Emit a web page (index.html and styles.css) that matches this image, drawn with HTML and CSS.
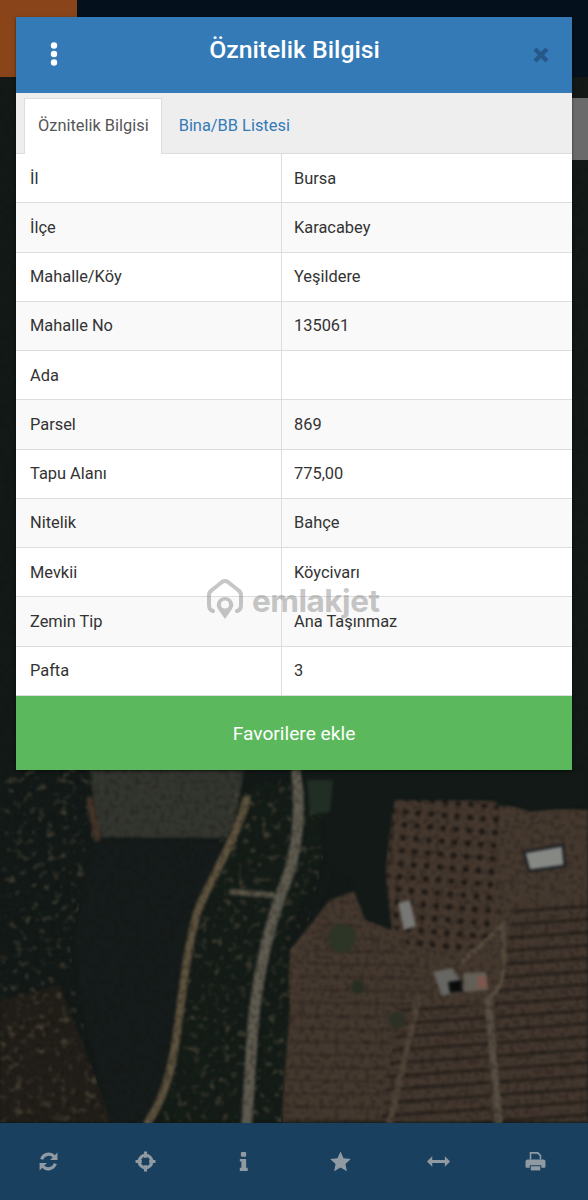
FILE: index.html
```html
<!DOCTYPE html>
<html lang="tr">
<head>
  <meta charset="UTF-8" />
  <meta name="viewport" content="width=device-width, initial-scale=1" />
  <title>Öznitelik Bilgisi</title>
  <link rel="stylesheet" href="styles.css">
</head>
<body>

  <!-- Satellite map behind the dialog -->
  <svg class="map" viewBox="0 0 588 1200" aria-hidden="true">
    <defs>
      <filter id="trees" x="0" y="0" width="100%" height="100%" color-interpolation-filters="sRGB">
        <feTurbulence type="fractalNoise" baseFrequency="0.13" numOctaves="2" seed="11" />
        <feColorMatrix type="matrix" values="0 0 0 0 0.36  0 0 0 0 0.33  0 0 0 0 0.26  4 0 0 0 -2.200" />
        <feGaussianBlur stdDeviation="1" />
      </filter>
      <filter id="grain" x="0" y="0" width="100%" height="100%" color-interpolation-filters="sRGB">
        <feTurbulence type="fractalNoise" baseFrequency="0.2" numOctaves="2" seed="3" />
        <feColorMatrix type="matrix" values="0 0 0 0 0.08  0 0 0 0 0.06  0 0 0 0 0.05  3.500 0 0 0 -1.500" />
        <feGaussianBlur stdDeviation="1" />
      </filter>
      <filter id="soft" color-interpolation-filters="sRGB"><feGaussianBlur stdDeviation="1.500" /></filter>
      <clipPath id="wooded">
        <polygon points="0,770 92,770 94,838 70,950 90,1060 110,1122 0,1122" />
        <polygon points="236,790 320,770 323,860 300,960 287,1030 281,1122 160,1122 185,1000 200,900" />
      </clipPath>
      <pattern id="orchard" width="13" height="13" patternUnits="userSpaceOnUse" patternTransform="rotate(5)">
        <rect width="13" height="13" fill="#46392f" />
        <circle cx="6.500" cy="6.500" r="2.800" fill="#1b1713" />
      </pattern>
      <pattern id="terrace" width="40" height="13" patternUnits="userSpaceOnUse" patternTransform="rotate(-4)">
        <rect width="40" height="13" fill="#44382f" />
        <rect y="8" width="40" height="2" fill="#1c1814" />
      </pattern>
      <pattern id="furrow" width="40" height="13" patternUnits="userSpaceOnUse" patternTransform="rotate(1)">
        <rect width="40" height="13" fill="#463a30" />
        <rect y="8" width="40" height="2" fill="#352c25" />
      </pattern>
    </defs>

    <rect width="588" height="1200" fill="#121a18" />

    <g filter="url(#soft)">
      <polygon points="0,1000 60,985 112,1122 0,1122" fill="#221f1a" />
      <polygon points="90,770 244,770 232,838 97,838" fill="#343730" />
      <polygon points="290,950 330,900 385,880 385,800 588,810 588,1122 282,1122" fill="#463a30" />
      <polygon points="295,1010 320,920 360,925 415,960 440,1000 400,1010 385,1122 282,1122" fill="url(#furrow)" />
      <path d="M392 800 H490 Q500 800 500 815 V910 Q498 945 460 950 H415 Q395 940 385 900 Z" fill="url(#orchard)" />
      <polygon points="400,1007 487,1005 492,1122 380,1122" fill="url(#terrace)" />
      <polygon points="513,908 588,905 588,1122 498,1122 495,1005" fill="url(#terrace)" />
      <polygon points="210,880 250,785 300,780 285,900 255,1010 247,1122 160,1122 180,1040 190,960" fill="#141d18" />
      <polygon points="287,930 300,905 323,860 318,780 305,780 304,850 285,905 270,950 262,1030 255,1122 281,1122 290,1010" fill="#141d18" />
    </g>

    <!-- tree cover -->
    <rect width="588" height="1200" filter="url(#trees)" clip-path="url(#wooded)" opacity="0.6" />
    <polygon points="97,838 232,842 208,890 191,960 180,1000 176,1040 161,1100 144,1122 112,1122 94,1060 79,990 75,940 86,880" fill="#151c1b" filter="url(#soft)" />

    <g fill="none" stroke-linecap="round" filter="url(#soft)">
      <path d="M246 800 C236 840 215 870 198 910 C186 950 182 1000 176 1040 C170 1080 160 1105 148 1122" stroke="#5f543f" stroke-width="8" />
      <path d="M90 800 L97 838" stroke="#46352a" stroke-width="7" />
      <path d="M232 892 L272 895" stroke="#5a5649" stroke-width="6" />
      <path d="M297 772 C300 810 300 850 281 895 C268 930 258 975 253 1025 L247 1122" stroke="#5f5c51" stroke-width="11" />
      <path d="M418 1000 L390 1122" stroke="#52463a" stroke-width="6" />
      <path d="M488 998 L499 1122" stroke="#585044" stroke-width="7" />
      <path d="M488 998 C506 990 505 960 503 925 L462 962" stroke="#5a4f40" stroke-width="4" />
    </g>

    <rect width="588" height="1200" filter="url(#grain)" opacity="0.3" />

    <g filter="url(#soft)">
      <polygon points="300,770 588,770 588,805 530,812 500,800 395,797 385,870 392,930 365,920 350,880 325,860 322,810 308,800" fill="#121916" />
      <polygon points="307,780 333,780 330,812 310,815" fill="#212e24" />
      <circle cx="342" cy="938" r="14" fill="#2c3526" />
      <circle cx="358" cy="987" r="7" fill="#282d21" />
      <circle cx="397" cy="1020" r="9" fill="#2d3125" />
      <polygon points="463,973 486,972 488,990 465,992" fill="#635f56" />
      <polygon points="477,977 487,976 487,988 478,989" fill="#7d574e" />
      <polygon points="398,903 410,900 416,926 404,930" fill="#777775" />
      <polygon points="433,972 452,968 466,990 442,996" fill="#656561" />
      <polygon points="448,982 461,980 463,991 450,993" fill="#0a0c0c" />
    </g>
    <polygon points="524,852 563,845 565,866 529,871" fill="#868884" stroke="#15191c" stroke-width="2.500" filter="url(#soft)" />

    <!-- other map tiles still loading at the top -->
    <rect width="588" height="77" fill="#04101c" />
    <rect width="77" height="77" fill="#8a4419" />
    <rect x="572" y="98" width="16" height="62" fill="#6a6a6a" />
  </svg>

  <!-- Attribute dialog -->
  <section class="modal">
    <header class="modal-head">
      <svg class="menu-dots" viewBox="0 0 10 24" aria-hidden="true">
        <circle cx="5" cy="3.500" r="3.200" />
        <circle cx="5" cy="12" r="3.200" />
        <circle cx="5" cy="20.500" r="3.200" />
      </svg>
      <h1>Öznitelik Bilgisi</h1>
      <svg class="close" viewBox="0 0 18 18" aria-hidden="true">
        <path d="M3 3 L15 15 M15 3 L3 15" />
      </svg>
    </header>

    <nav class="tabs">
      <a class="tab active" href="#">Öznitelik Bilgisi</a>
      <a class="tab" href="#">Bina/BB Listesi</a>
    </nav>

    <table class="attrs">
      <tr><td>İl</td><td>Bursa</td></tr>
      <tr><td>İlçe</td><td>Karacabey</td></tr>
      <tr><td>Mahalle/Köy</td><td>Yeşildere</td></tr>
      <tr><td>Mahalle No</td><td>135061</td></tr>
      <tr><td>Ada</td><td></td></tr>
      <tr><td>Parsel</td><td>869</td></tr>
      <tr><td>Tapu Alanı</td><td>775,00</td></tr>
      <tr><td>Nitelik</td><td>Bahçe</td></tr>
      <tr><td>Mevkii</td><td>Köycivarı</td></tr>
      <tr><td>Zemin Tip</td><td>Ana Taşınmaz</td></tr>
      <tr><td>Pafta</td><td>3</td></tr>
    </table>

    <button class="fav">Favorilere ekle</button>

    <!-- Watermark -->
    <div class="watermark">
      <svg viewBox="0 0 38 48" aria-hidden="true">
        <path class="wm-house" d="M7 35 Q3 34 3 29 V19 Q3 16 6 14 L16 6 Q19 4 22 6 L32 14 Q35 16 35 19 V29 Q35 34 31 35" />
        <path class="wm-pin" d="M19 43 L12 33 Q10 30 11 27 Q13 21 19 21 Q25 21 27 27 Q28 30 26 33 Z M19 24.500 A4 4 0 1 0 19 32.500 A4 4 0 1 0 19 24.500 Z" />
      </svg>
      <span>emlakjet</span>
    </div>
  </section>

  <!-- Bottom toolbar -->
  <footer class="toolbar">
    <svg viewBox="0 0 20 20" aria-hidden="true">
      <path class="line" d="M3.500 8 A7 7 0 0 1 15.500 5.500" />
      <path d="M18.500 1.500 V8.500 H11.500 Z" />
      <path class="line" d="M16.500 12 A7 7 0 0 1 4.500 14.500" />
      <path d="M1.500 18.500 V11.500 H8.500 Z" />
    </svg>
    <svg viewBox="0 0 20 20" aria-hidden="true">
      <circle class="line" cx="10" cy="10" r="6" />
      <path class="line" d="M10 0.500 V6.500 M10 13.500 V19.500 M0.500 10 H6.500 M13.500 10 H19.500" />
    </svg>
    <svg viewBox="0 0 20 20" aria-hidden="true">
      <rect x="7.500" y="1" width="5" height="4.500" rx="1" />
      <path d="M6.500 7.500 H12.500 V16 H14 V19 H6.500 V16 H8 V10 H6.500 Z" />
    </svg>
    <svg viewBox="0 0 20 20" aria-hidden="true">
      <polygon points="10,0.500 12.900,6.800 19.800,7.600 14.700,12.300 16.100,19.200 10,15.700 3.900,19.200 5.300,12.300 0.200,7.600 7.100,6.800" />
    </svg>
    <svg viewBox="0 0 20 20" aria-hidden="true">
      <path d="M0 10 L5 5 V8.500 H17 V5 L22 10 L17 15 V11.500 H5 V15 Z" />
    </svg>
    <svg viewBox="0 0 20 20" aria-hidden="true">
      <path d="M4.500 1 H12.500 L15.500 4 V8 H14 V4.800 L11.800 2.500 H6 V8 H4.500 Z" />
      <path d="M2.500 8 H17.500 Q19.500 8 19.500 10 V15 Q19.500 16 18.500 16 H15.500 V13.500 H4.500 V16 H1.500 Q0.500 16 0.500 15 V10 Q0.500 8 2.500 8 Z" />
      <rect x="5.500" y="14.500" width="9" height="4" />
    </svg>
  </footer>

</body>
</html>
```

FILE: styles.css
```css
/* === Global === */
html, body {
  margin: 0;
  padding: 0;
}

body {
  position: relative;
  width: 588px;
  height: 1200px;
  overflow: hidden;
  display: flex;
  flex-direction: column;
  font-family: Roboto, "Liberation Sans", sans-serif;
  color: #333;
}

.map {
  position: absolute;
  top: 0;
  left: 0;
  width: 588px;
  height: 1200px;
}

/* === Dialog === */
.modal {
  position: relative;
  width: 556px;
  margin: 17px 16px 0;
  box-shadow: 0 1px 3px rgba(0,0,0,0.5);
}

.modal-head {
  display: flex;
  align-items: center;
  justify-content: space-between;
  height: 76px;
  padding: 0 22px 0 33px;
  background: #337ab7;
  color: #fff;
}

.modal-head h1 {
  flex: 1;
  margin: 0 2px 11px 0;
  font-size: 24.800px;
  font-weight: 500;
  text-align: center;
}

.menu-dots {
  width: 10px;
  height: 24px;
  margin-top: -3px;
  fill: #fff;
}

.close {
  width: 18px;
  height: 18px;
  fill: none;
  stroke: #26598a;
  stroke-width: 4.500;
}

/* === Tabs === */
.tabs {
  display: flex;
  height: 61px;
  padding: 5px 8px 0;
  box-sizing: border-box;
  background: #eee;
  border-bottom: 1px solid #ddd;
}

.tab {
  display: flex;
  align-items: center;
  height: 56px;
  box-sizing: border-box;
  padding: 0 13px 2px 17px;
  font-size: 16.400px;
  color: #337ab7;
  text-decoration: none;
}

.tab.active {
  padding: 0 12px 2px 13px;
  border: 1px solid #ddd;
  border-bottom: none;
  background: #fff;
  color: #555;
}

/* === Attribute table === */
.attrs {
  width: 100%;
  height: 542px;
  border-collapse: separate;
  border-spacing: 0;
  table-layout: fixed;
  background: #fff;
  font-size: 16.400px;
}

.attrs tr:nth-child(even) {
  background: #f9f9f9;
}

.attrs td {
  box-sizing: border-box;
  padding: 0 12px;
  border-bottom: 1px solid #ddd;
}

.attrs td:first-child {
  width: 266px;
  padding-left: 14px;
  border-right: 1px solid #ddd;
}

.fav {
  display: block;
  width: 100%;
  height: 74px;
  border: none;
  background: #5cb85c;
  color: #fff;
  font-family: inherit;
  font-size: 19.200px;
}

/* === Watermark === */
.watermark {
  position: absolute;
  top: 559px;
  left: 190px;
  display: flex;
  align-items: center;
  gap: 8px;
  color: rgba(120,120,120,0.42);
  pointer-events: none;
}

.watermark svg {
  width: 38px;
  height: 48px;
}

.wm-house {
  fill: none;
  stroke: rgba(120,120,120,0.42);
  stroke-width: 4;
  stroke-linecap: round;
}

.wm-pin {
  fill: rgba(120,120,120,0.42);
  fill-rule: evenodd;
}

.watermark span {
  font-family: Inter, Roboto, sans-serif;
  font-size: 31.500px;
  font-weight: 700;
  letter-spacing: -0.500px;
}

/* === Bottom toolbar === */
.toolbar {
  position: relative;
  margin-top: auto;
  height: 77px;
  display: flex;
  align-items: center;
  justify-content: space-around;
  box-sizing: border-box;
  padding: 0 4px 1px 0;
  background: #1a4060;
}

.toolbar svg {
  width: 21px;
  height: 21px;
  overflow: visible;
  fill: #8f9aa3;
}

.toolbar .line {
  fill: none;
  stroke: #8f9aa3;
  stroke-width: 3;
}
```
